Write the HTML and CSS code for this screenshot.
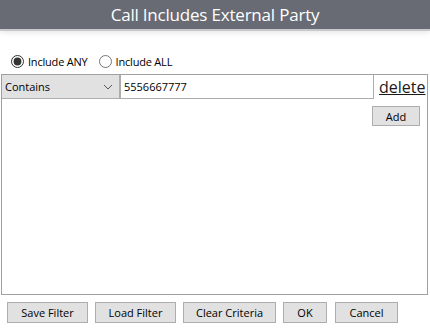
FILE: index.html
```html
<!DOCTYPE html>
<html lang="en">
<head>
  <meta charset="UTF-8" />
  <title>Call Includes External Party</title>
  <link rel="stylesheet" href="styles.css">
</head>
<body>
  <div class="header">Call Includes External Party</div>

  <div class="scope">
    <label class="radio"><input type="radio" name="scope" checked> Include ANY</label>
    <label class="radio"><input type="radio" name="scope"> Include ALL</label>
  </div>

  <div class="criteria">
    <div class="row">
      <div class="select">
        <span>Contains</span>
        <svg width="10" height="6" viewBox="0 0 10 6"><path d="M1 1 L5 5 L9 1" fill="none" stroke="#555" stroke-width="1"/></svg>
      </div>
      <input class="value" type="text" value="5556667777">
      <a href="#" class="delete">delete</a>
    </div>
    <div class="add-row">
      <button class="btn add">Add</button>
    </div>
  </div>

  <div class="actions">
    <button class="btn save">Save Filter</button>
    <button class="btn load">Load Filter</button>
    <button class="btn clear">Clear Criteria</button>
    <button class="btn ok">OK</button>
    <button class="btn cancel">Cancel</button>
  </div>
</body>
</html>
```
FILE: styles.css
```css
body { margin: 0; font-family: "Open Sans", "Noto Sans", sans-serif; font-size: 11px; color: #000; background: #fff; }

.header {
  height: 29px; line-height: 29px; background: #686b73; color: #fff;
  text-align: center; font-size: 17px; letter-spacing: -0.2px;
  box-shadow: 0 2px 0 #c8c9cc, 0 3px 6px rgba(0,0,0,0.12);
}

.scope { display: flex; gap: 11px; padding: 20px 0 0 11px; height: 25px; align-items: center; }
.radio { display: flex; align-items: center; gap: 4px; letter-spacing: -0.2px; }
.radio input { margin: 0; width: 13px; height: 13px; accent-color: #333; }

.criteria {
  margin: 0 2px 0 1px; height: 219px; border: 1px solid #a0a0a0;
}
.row { display: flex; align-items: stretch; height: 24px; }
.select {
  width: 118px; display: flex; align-items: center; justify-content: space-between;
  padding: 0 6px 0 3px; box-sizing: border-box;
  background: #e1e1e1; border: 1px solid #adadad; border-left: 0; border-top: 0;
}
.value {
  width: 254px; box-sizing: border-box; margin: 0; padding: 0 3px;
  border: 1px solid #adadad; border-top: 0; font: inherit;
}
.delete { color: #1a1a1a; font-size: 16px; margin-left: 5px; line-height: 24px; }

.add-row { display: flex; justify-content: flex-end; padding: 7px 7px 0 0; }

.btn {
  font: inherit; background: #e1e1e1; border: 1px solid #adadad;
  height: 21px; padding: 0; color: #000;
}
.add { width: 48px; height: 20px; }

.actions { display: flex; gap: 7px; padding: 7px 0 0 7px; }
.save { width: 81px; }
.load { width: 81px; }
.clear { width: 93px; }
.ok { width: 44px; margin-right: 1px; }
.cancel { width: 63px; }
```
